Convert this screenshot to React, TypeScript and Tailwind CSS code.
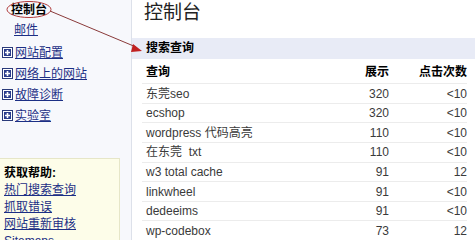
import React from "react";

const font = { fontFamily: '"Liberation Sans", "Noto Sans CJK SC", sans-serif' };

const rows: [string, string, string][] = [
  ["东莞seo", "320", "<10"],
  ["ecshop", "320", "<10"],
  ["wordpress 代码高亮", "110", "<10"],
  ["在东莞  txt", "110", "<10"],
  ["w3 total cache", "91", "12"],
  ["linkwheel", "91", "<10"],
  ["dedeeims", "91", "<10"],
  ["wp-codebox", "73", "12"],
];

function PlusBox() {
  return (
    <svg width="11" height="11" viewBox="0 0 11 11" className="shrink-0">
      <rect x="0.5" y="0.5" width="10" height="10" fill="#ffffff" stroke="#2a3a7a" />
      <rect x="2" y="2" width="7" height="7" fill="#2b3d8c" />
      <path d="M5.5 3v5M3 5.5h5" stroke="#ffffff" strokeWidth="1.6" />
    </svg>
  );
}

export default function App() {
  return (
    <div className="relative flex h-[240px] w-[475px] overflow-hidden bg-white text-[12px] text-[#222]" style={font}>
      {/* Sidebar */}
      <div className="flex w-[132px] shrink-0 flex-col border-r border-[#dde1ea] bg-[#f7f8fc]">
        <div className="flex h-[18px] items-center pl-[11px] pt-[2px] font-bold text-black">控制台</div>
        <div className="mt-[3px] flex h-[18px] items-center pl-[14px] text-[#1c2f85] underline">邮件</div>
        <div className="mt-[3px] flex flex-col">
          {["网站配置", "网络上的网站", "故障诊断", "实验室"].map((t) => (
            <div key={t} className="flex h-[21px] items-center gap-[2px] pl-[2px]">
              <PlusBox />
              <span className="text-[#1c2f85] underline">{t}</span>
            </div>
          ))}
        </div>
        <div className="mt-[32px] ml-0 mr-[11px] flex flex-1 flex-col border-r border-t border-[#e6e6c8] bg-[#fdfde9] pl-[4px] pt-[5px]">
          <div className="flex h-[17px] items-center font-bold text-black">获取帮助:</div>
          <div className="flex h-[17px] items-center text-[#1c2f85] underline">热门搜索查询</div>
          <div className="flex h-[17px] items-center text-[#1c2f85] underline">抓取错误</div>
          <div className="flex h-[17px] items-center text-[#1c2f85] underline">网站重新审核</div>
          <div className="flex h-[17px] items-center text-[#1c2f85] underline">Sitemaps</div>
        </div>
      </div>

      {/* Main */}
      <div className="flex flex-1 flex-col">
        <div className="flex h-[38px] items-start pl-[12px] pt-[1px] text-[19px] leading-[24px] text-[#222]">控制台</div>
        <div className="flex h-[22px] items-center bg-[#e8ebf6] pl-[14px] font-bold text-black">搜索查询</div>
        <div className="flex flex-col pl-[10px] pr-[8px] pt-[2px]">
          <div className="flex h-[22px] items-center font-bold text-black">
            <span className="flex-1 pl-[4px]">查询</span>
            <span className="w-[60px] text-right">展示</span>
            <span className="w-[78px] text-right">点击次数</span>
          </div>
          {rows.map(([q, s, c]) => (
            <div key={q} className="flex h-[19.6px] items-center border-t border-[#ececec] text-[#3a3a3a]">
              <span className="flex-1 whitespace-pre pl-[4px]">{q}</span>
              <span className="w-[60px] text-right">{s}</span>
              <span className="w-[78px] text-right">{c}</span>
            </div>
          ))}
        </div>
      </div>

      {/* Annotation overlay */}
      <svg className="pointer-events-none absolute left-0 top-0" width="475" height="240">
        <ellipse cx="29" cy="9.5" rx="22" ry="8" fill="none" stroke="#b03a3a" strokeWidth="1" />
        <line x1="50" y1="11" x2="136" y2="47" stroke="#8a3a3a" strokeWidth="1" />
        <polygon points="133,44 142,51 131,52" fill="#c02020" />
      </svg>
    </div>
  );
}
